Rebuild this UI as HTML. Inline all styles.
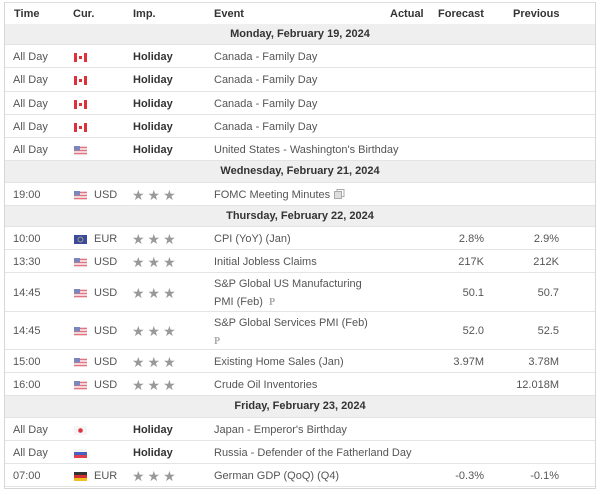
<!DOCTYPE html><html><head><style>
body{margin:0;width:600px;height:490px;background:#fff;font-family:"Liberation Sans",Arial,sans-serif;font-size:11px;color:#333;position:relative;overflow:hidden}
.box{position:absolute;left:4px;top:2px;width:590px;height:485px;border:1px solid #d6d6d6;border-top:1px solid #ddd}
.r{position:absolute;left:5px;width:590px;border-bottom:1px solid #e4e4e4}
.d{background:#efefef;font-weight:bold;color:#333;text-align:center;font-size:11px}
.c{position:absolute;white-space:nowrap}
.hd{position:absolute;left:5px;top:3px;width:590px;height:21px;border-bottom:2px solid #ccc;font-weight:bold;color:#333}
.f{position:absolute;width:13px;height:9px}
.st{color:#999;font-size:14px;letter-spacing:3px}
.P{font-family:"Liberation Serif",serif;font-weight:bold;color:#aaa;font-size:10px}
</style></head><body>
<div class="box"></div>
<div class="hd">
<span class="c" style="left:9px;top:5px">Time</span><span class="c" style="left:68px;top:5px">Cur.</span><span class="c" style="left:128px;top:5px">Imp.</span><span class="c" style="left:209px;top:5px">Event</span><span class="c" style="left:385px;top:5px">Actual</span><span class="c" style="left:433px;top:5px">Forecast</span><span class="c" style="left:508px;top:5px">Previous</span>
</div>
<div id="rows"></div>
<script>
const ca='<svg class="f" viewBox="0 0 13 9"><rect width="13" height="9" fill="#fff"/><rect width="3" height="9" fill="#e0303a"/><rect x="10" width="3" height="9" fill="#e0303a"/><rect x="5" y="3" width="3" height="3" fill="#e0303a"/></svg>';
const us='<svg class="f" viewBox="0 0 13 9"><rect width="13" height="9" fill="#f4d4d6"/><rect y="1" width="13" height="1" fill="#e07580"/><rect y="4" width="13" height="1" fill="#e07580"/><rect y="7" width="13" height="1" fill="#e07580"/><rect width="6" height="4.5" fill="#7b86bd"/></svg>';
const eu='<svg class="f" viewBox="0 0 13 9"><rect width="13" height="9" fill="#3a4aa0"/><circle cx="6.5" cy="4.5" r="2.5" fill="none" stroke="#c9b85a" stroke-width=".7"/></svg>';
const jp='<svg class="f" viewBox="0 0 13 9"><rect width="13" height="9" fill="#f5f5f5"/><circle cx="6.5" cy="4.5" r="2.3" fill="#e03040"/></svg>';
const ru='<svg class="f" viewBox="0 0 13 9"><rect width="13" height="3" fill="#f5f5f5"/><rect y="3" width="13" height="3" fill="#4860c0"/><rect y="6" width="13" height="3" fill="#e04050"/></svg>';
const de='<svg class="f" viewBox="0 0 13 9"><rect width="13" height="3" fill="#333"/><rect y="3" width="13" height="3" fill="#d03030"/><rect y="6" width="13" height="3" fill="#f0c020"/></svg>';
const doc='<svg width="11" height="10" viewBox="0 0 11 10" style="vertical-align:-1px;margin-left:4px"><rect x="3" y="0.5" width="7" height="7" fill="#fff" stroke="#aaa"/><rect x="0.5" y="2.5" width="7" height="7" fill="#ddd" stroke="#aaa"/></svg>';
const R=[
['d',24,21,'Monday, February 19, 2024'],
['h',45,23,'All Day',ca,'Canada - Family Day'],
['h',68,24,'All Day',ca,'Canada - Family Day'],
['h',92,23,'All Day',ca,'Canada - Family Day'],
['h',115,23,'All Day',ca,'Canada - Family Day'],
['h',138,23,'All Day',us,"United States - Washington's Birthday"],
['d',161,22,'Wednesday, February 21, 2024'],
['e',183,23,'19:00',us,'USD','FOMC Meeting Minutes'+doc,'',''],
['d',206,21,'Thursday, February 22, 2024'],
['e',227,23,'10:00',eu,'EUR','CPI (YoY) (Jan)','2.8%','2.9%'],
['e',250,23,'13:30',us,'USD','Initial Jobless Claims','217K','212K'],
['e2',273,39,'14:45',us,'USD','S&amp;P Global US Manufacturing<br>PMI (Feb) &nbsp;<span class="P">P</span>','50.1','50.7'],
['e2',312,38,'14:45',us,'USD','S&amp;P Global Services PMI (Feb)<br><span class="P">P</span>','52.0','52.5'],
['e',350,23,'15:00',us,'USD','Existing Home Sales (Jan)','3.97M','3.78M'],
['e',373,23,'16:00',us,'USD','Crude Oil Inventories','','12.018M'],
['d',396,22,'Friday, February 23, 2024'],
['h',418,23,'All Day',jp,"Japan - Emperor's Birthday"],
['h',441,23,'All Day',ru,'Russia - Defender of the Fatherland Day'],
['e',464,23,'07:00',de,'EUR','German GDP (QoQ) (Q4)','-0.3%','-0.1%'],
];
let h='';
for(const r of R){
 const [t,top,hh]=r; const m=Math.round(hh/2)-6;
 if(t=='d'){h+=`<div class="r d" style="top:${top}px;height:${hh-1}px;line-height:${hh-1}px">${r[3]}</div>`;continue;}
 h+=`<div class="r" style="top:${top}px;height:${hh-1}px">`;
 h+=`<span class="c" style="left:8px;top:${m}px;color:#555">${r[3]}</span>`;
 h+=`<span style="position:absolute;left:69px;top:${m+2}px">${r[4]}</span>`;
 if(t=='h'){
  h+=`<span class="c" style="left:128px;top:${m}px;font-weight:bold">Holiday</span><span class="c" style="left:209px;top:${m}px;color:#555">${r[5]}</span>`;
 }else{
  h+=`<span class="c" style="left:89px;top:${m}px;color:#555">${r[5]}</span><span class="c st" style="left:127px;top:${m-2}px">★★★</span>`;
  h+=`<span class="c" style="left:209px;top:${t=='e2'?2:m}px;color:#555;line-height:${t=='e2'?'18px':'normal'}">${r[6]}</span>`;
  h+=`<span class="c" style="right:111px;top:${m}px;color:#555">${r[7]}</span><span class="c" style="right:36px;top:${m}px;color:#555">${r[8]}</span>`;
 }
 h+='</div>';
}
document.getElementById('rows').innerHTML=h;
</script>
</body></html>
